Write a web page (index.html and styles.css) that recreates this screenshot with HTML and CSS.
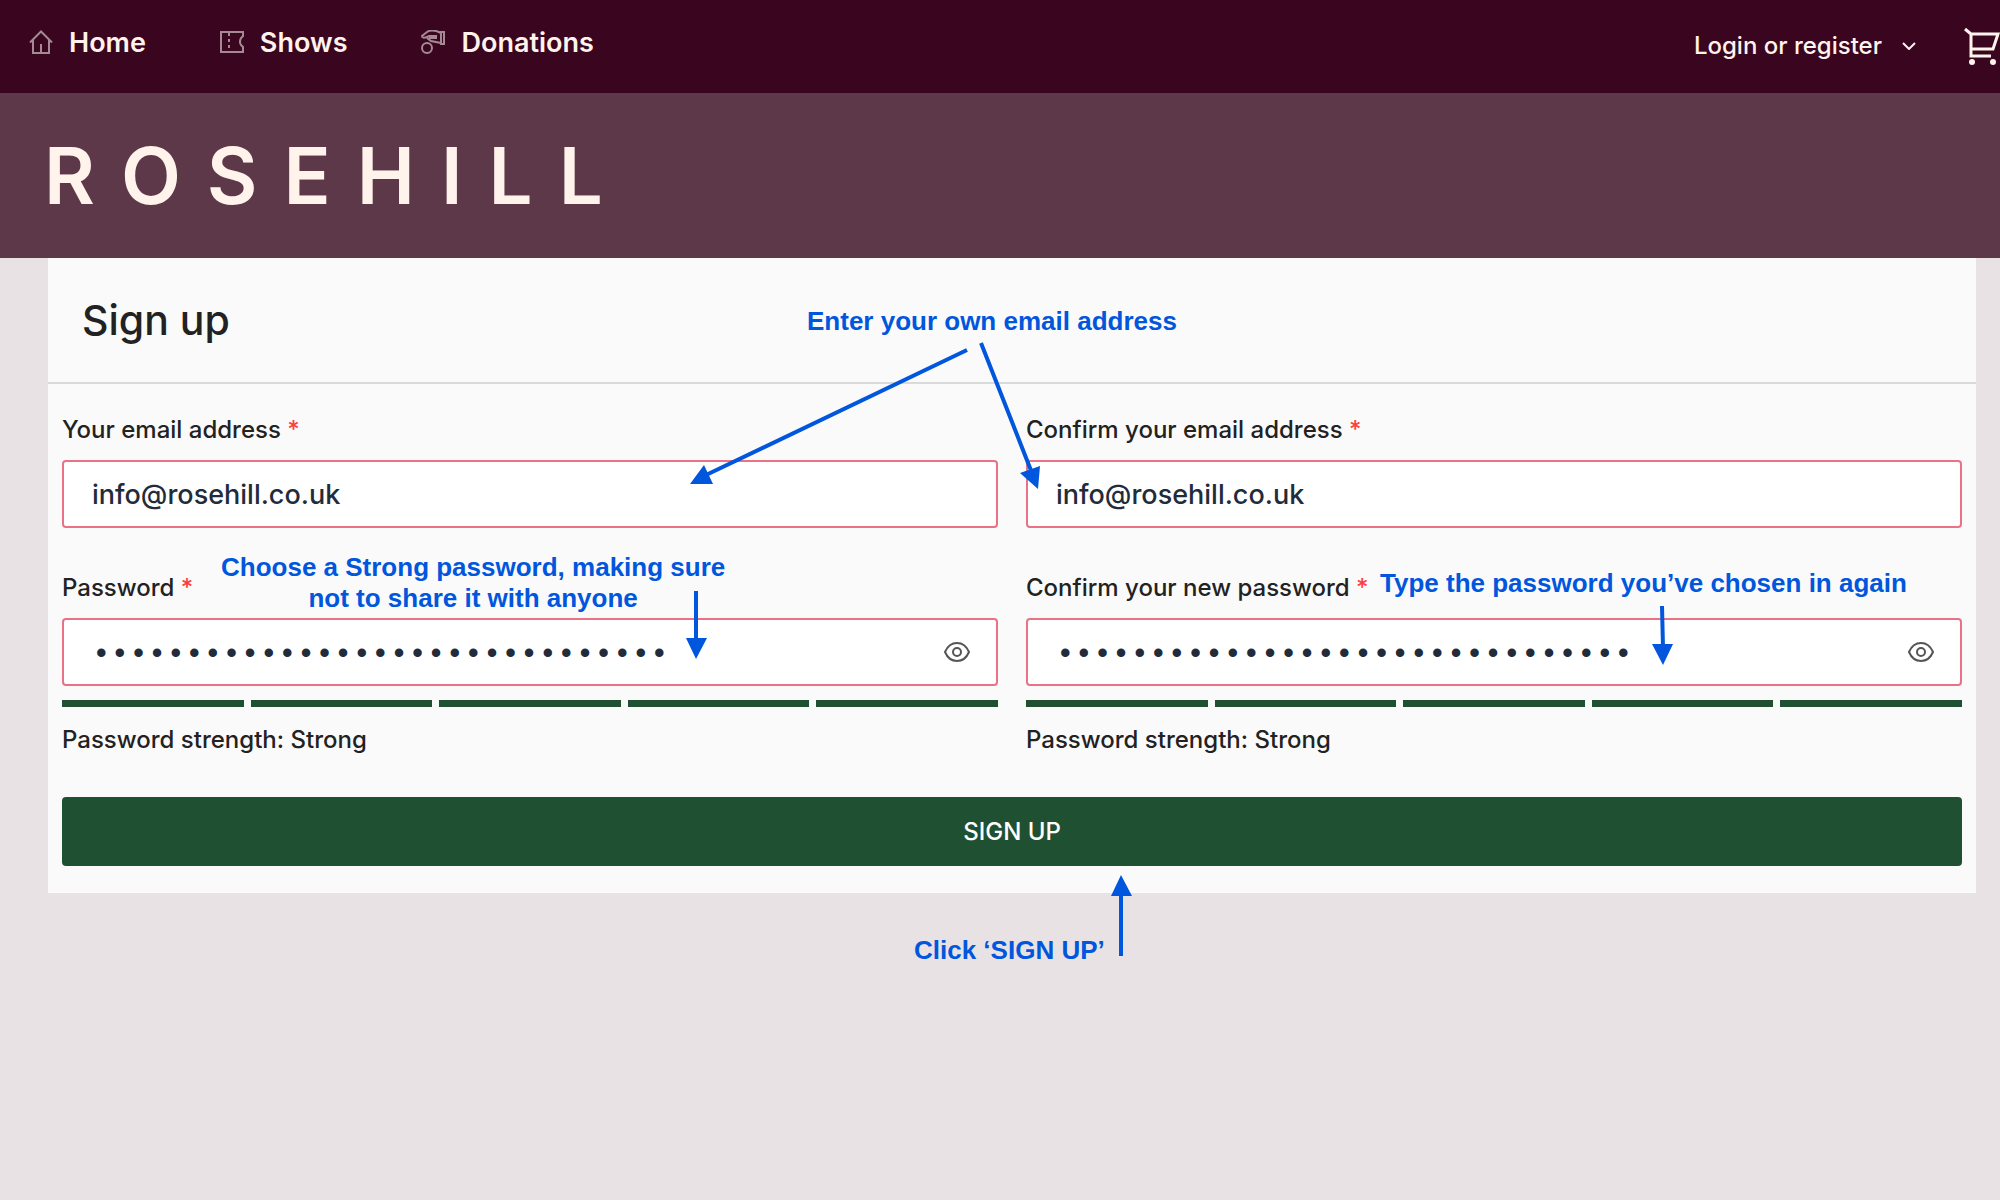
FILE: index.html
```html
<!DOCTYPE html>
<html lang="en">
<head>
    <meta charset="UTF-8">
    <meta name="viewport" content="width=device-width, initial-scale=1.0">
    <title>Rosehill - Sign up</title>
    <link rel="stylesheet" href="styles.css">
</head>
<body>
    <header>
        <nav class="top-nav">
            <div class="nav-links">
                <a href="#" class="nav-link">
                    <svg class="nav-icon" viewBox="0 0 24 24"><path d="M1 12.5 12 1.5l11 11M4 10v13h16V10M12 23v-9"/></svg>
                    Home
                </a>
                <a href="#" class="nav-link">
                    <svg class="nav-icon" viewBox="0 0 24 24"><path d="M1 2h22v4l-2 2q-2 4 0 7l2 2v5H1z"/><path d="M9 3v19" stroke-dasharray="3 3"/></svg>
                    Shows
                </a>
                <a href="#" class="nav-link">
                    <svg class="nav-icon" viewBox="0 0 24 24"><path d="M20 2h3v12h-3zM20 3C14 0 9 0 6 2L1 6c0 2 2 2 5 1l2-1h8M8 8h8M6 8l4 3 10 2"/><ellipse cx="6" cy="18" rx="5" ry="5"/></svg>
                    Donations
                </a>
            </div>
            <div class="nav-account">
                <button type="button" class="login-btn">
                    Login or register
                    <svg class="chevron" viewBox="0 0 14 8"><path d="M1 1l6 6 6-6"/></svg>
                </button>
                <a href="#" class="cart" aria-label="Basket">
                    <svg class="cart-icon" viewBox="0 0 36 38"><path d="M1 2l6 5v22h20M7 7h27l-5 15H7"/><circle cx="8" cy="35" r="3"/><circle cx="29" cy="35" r="3"/></svg>
                </a>
            </div>
        </nav>
        <div class="banner">
            <a href="#" class="logo">ROSEHILL</a>
        </div>
    </header>

    <main class="card">
        <h1 class="card-title">Sign up</h1>
        <form class="signup-form">
            <div class="field">
                <label for="email">Your email address <span class="required">*</span></label>
                <input type="email" id="email" class="text-input" value="info@rosehill.co.uk">
            </div>
            <div class="field">
                <label for="confirm-email">Confirm your email address <span class="required">*</span></label>
                <input type="email" id="confirm-email" class="text-input" value="info@rosehill.co.uk">
            </div>
            <div class="field">
                <label for="password">Password <span class="required">*</span></label>
                <div class="password-box">
                    <input type="password" id="password" class="text-input password-input" value="correct-horse-battery-staple-42">
                    <button type="button" class="eye-btn" aria-label="Show password">
                        <svg class="eye" viewBox="0 0 26 22"><path d="M1 11C4 4 8 2 13 2S22 4 25 11c-3 7-7 9-12 9S4 18 1 11z"/><circle cx="13" cy="11" r="4"/></svg>
                    </button>
                </div>
                <div class="strength-bars"><span></span><span></span><span></span><span></span><span></span></div>
                <p class="strength-text">Password strength: Strong</p>
            </div>
            <div class="field">
                <label for="confirm-password">Confirm your new password <span class="required">*</span></label>
                <div class="password-box">
                    <input type="password" id="confirm-password" class="text-input password-input" value="correct-horse-battery-staple-42">
                    <button type="button" class="eye-btn" aria-label="Show password">
                        <svg class="eye" viewBox="0 0 26 22"><path d="M1 11C4 4 8 2 13 2S22 4 25 11c-3 7-7 9-12 9S4 18 1 11z"/><circle cx="13" cy="11" r="4"/></svg>
                    </button>
                </div>
                <div class="strength-bars"><span></span><span></span><span></span><span></span><span></span></div>
                <p class="strength-text">Password strength: Strong</p>
            </div>
            <button type="submit" class="submit-btn">SIGN UP</button>
        </form>
    </main>

    <!-- Help notes drawn over the form -->
    <svg class="arrows" viewBox="0 0 2000 1200">
        <path class="arrow-line" d="M967 350 706 475M981 343l51 130M696 591v50M1662 606l1 42M1121 956v-62"/>
        <path class="arrow-head" d="M690 484l14-19 9 19zM1038 489l-18-16 20-7zM696 659l-10-21h21zM1663 665l-11-21h21zM1121 875l-10 21h21z"/>
    </svg>
    <p class="note note-email">Enter your own email address</p>
    <p class="note note-password">Choose a Strong password, making sure<br>not to share it with anyone</p>
    <p class="note note-confirm">Type the password you’ve chosen in again</p>
    <p class="note note-submit">Click ‘SIGN UP’</p>
</body>
</html>
```
FILE: styles.css
```css
* {
    box-sizing: border-box;
}

body {
    font-family: Inter, 'Liberation Sans', sans-serif;
    font-weight: 500;
    margin: 0;
    background: #e8e2e4;
    color: #222;
    position: relative;
    min-height: 100vh;
    overflow-x: hidden;
}

svg {
    fill: none;
    stroke: currentColor;
}

/* Top navigation */
.top-nav {
    display: flex;
    justify-content: space-between;
    height: 93px;
    padding-left: 29px;
    background: #39051f;
    color: #fff3ec;
}

.nav-links {
    display: flex;
    gap: 74px;
    height: 84px;
}

.nav-link {
    display: flex;
    align-items: center;
    gap: 16px;
    font-size: 27px;
    font-weight: 600;
    color: inherit;
    text-decoration: none;
}

.nav-icon {
    width: 24px;
    height: 24px;
    stroke-width: 2;
    color: #a58a94;
}

.nav-account {
    display: flex;
    align-items: center;
    gap: 48px;
    height: 91px;
}

.login-btn {
    display: flex;
    align-items: center;
    gap: 20px;
    padding: 0;
    border: none;
    background: none;
    font: inherit;
    font-size: 24px;
    color: inherit;
    cursor: pointer;
}

.chevron {
    width: 14px;
    height: 8px;
    stroke-width: 2;
}

.cart {
    display: flex;
    color: inherit;
}

.cart-icon {
    width: 36px;
    height: 38px;
    stroke-width: 3;
}

.cart-icon circle {
    fill: currentColor;
    stroke: none;
}

/* Banner */
.banner {
    display: flex;
    align-items: center;
    height: 165px;
    padding: 0 44px;
    background: #5c3849;
}

.logo {
    font-size: 78px;
    font-weight: 600;
    letter-spacing: 26px;
    color: #fff3ec;
    text-decoration: none;
}

/* Sign up card */
.card {
    margin: 0 24px 0 48px;
    background: #fafafa;
}

.card-title {
    margin: 0;
    padding: 36px 34px;
    border-bottom: 2px solid #d9dbda;
    font-size: 41px;
    line-height: 52px;
    font-weight: 500;
}

.signup-form {
    display: grid;
    grid-template-columns: 1fr 1fr;
    gap: 44px 28px;
    padding: 30px 14px 27px;
}

.field label,
.strength-text {
    display: block;
    margin: 0;
    font-size: 24px;
    line-height: 32px;
}

.field label {
    margin-bottom: 14px;
}

.field .strength-text {
    line-height: 26px;
}

.required {
    color: #ff4040;
}

.text-input {
    display: block;
    width: 100%;
    height: 68px;
    padding: 0 28px;
    border: 2px solid #ea7186;
    border-radius: 4px;
    background: #fff;
    font: inherit;
    font-size: 27px;
    color: #222b3a;
}

.password-box {
    position: relative;
}

.password-input {
    padding-top: 4px;
    font-family: 'Liberation Mono', monospace;
    font-size: 31px;
}

.eye-btn {
    position: absolute;
    top: 0;
    right: 28px;
    height: 100%;
    padding: 0;
    border: none;
    background: none;
    color: #555;
    cursor: pointer;
}

.eye {
    display: block;
    width: 26px;
    height: 22px;
    stroke-width: 2;
}

.strength-bars {
    display: flex;
    gap: 7px;
    margin: 14px 0 20px;
}

.strength-bars span {
    flex: 1;
    height: 7px;
    background: #1f5031;
}

.submit-btn {
    grid-column: 1 / -1;
    height: 69px;
    border: none;
    border-radius: 4px;
    background: #1f5031;
    font: inherit;
    font-size: 24px;
    color: #fff;
    cursor: pointer;
}

/* Notes and arrows */
.arrows {
    position: absolute;
    top: 0;
    left: 0;
    width: 100%;
    pointer-events: none;
}

.arrow-line {
    stroke: #0056dc;
    stroke-width: 4;
}

.arrow-head {
    fill: #0056dc;
    stroke: none;
}

.note {
    position: absolute;
    margin: 0;
    font-family: 'Liberation Sans', Arial, sans-serif;
    font-size: 26px;
    line-height: 31px;
    font-weight: bold;
    text-align: center;
    white-space: nowrap;
    color: #0056dc;
}

.note-email {
    top: 306px;
    left: 807px;
}

.note-password {
    top: 552px;
    left: 221px;
}

.note-confirm {
    top: 568px;
    left: 1380px;
}

.note-submit {
    top: 935px;
    left: 914px;
}
```
